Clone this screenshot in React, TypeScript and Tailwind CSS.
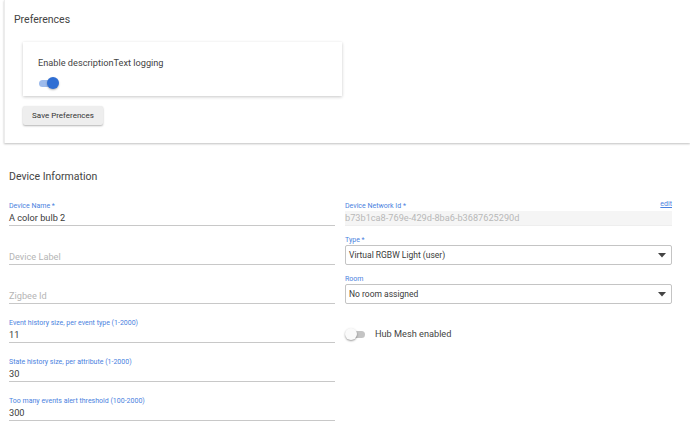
import React from "react";

const font = { fontFamily: "Roboto, 'Noto Sans', Arial, sans-serif" };

function Toggle({ on }: { on: boolean }) {
  return (
    <div className="relative w-[21px] h-[12px] shrink-0">
      <div
        className={
          on
            ? "absolute left-[1px] top-[3px] w-[17px] h-[7px] rounded-full bg-[#9dbbec]"
            : "absolute left-[3px] top-[3px] w-[17px] h-[7px] rounded-full bg-[#c4c4c4]"
        }
      />
      <div
        className={
          on
            ? "absolute left-[9px] top-0 w-[12px] h-[12px] rounded-full bg-[#2f6ed3] shadow-[0_1px_2px_rgba(0,0,0,0.3)]"
            : "absolute left-0 top-0 w-[12px] h-[12px] rounded-full bg-[#fafafa] shadow-[0_1px_2px_rgba(0,0,0,0.4)]"
        }
      />
    </div>
  );
}

function LeftField({ label, value, placeholder }: { label?: string; value?: string; placeholder?: string }) {
  return (
    <div className="h-[39px] flex flex-col justify-end">
      {label && <div className="h-[10px] text-[7px] leading-[10px] text-[#4a82e0]">{label}</div>}
      <div className="h-[15px] border-b border-[#c8c8c8] text-[9.2px] leading-[14px]">
        {value ? <span className="text-[#3a3a3a]">{value}</span> : <span className="text-[#b5b5b5]">{placeholder}</span>}
      </div>
    </div>
  );
}

function Arrow() {
  return (
    <svg width="8" height="5" viewBox="0 0 8 5" className="shrink-0">
      <path d="M0 0 L8 0 L4 4.5 Z" fill="#444" />
    </svg>
  );
}

function SelectField({ label, value }: { label: string; value: string }) {
  return (
    <div className="h-[39px] flex flex-col justify-end">
      <div className="h-[10px] text-[7px] leading-[10px] text-[#4a82e0]">{label}</div>
      <div className="h-[20px] border border-[#c4c4c4] rounded-[2px] flex items-center justify-between pl-[3px] pr-[5px] text-[8.5px] text-[#3a3a3a]">
        <span>{value}</span>
        <Arrow />
      </div>
    </div>
  );
}

export default function App() {
  return (
    <div className="w-[690px] h-[431px] bg-white overflow-hidden" style={font}>
      <div className="ml-[4px] h-[143px] border-l border-[#ececec] shadow-[0_1px_2px_rgba(0,0,0,0.25)] bg-white">
        <div className="pt-[12px] pl-[9px] text-[10.5px] leading-[15px] text-[#444]">Preferences</div>
        <div className="ml-[18px] mt-[15px] w-[319px] h-[54px] bg-white shadow-[0_1px_3px_rgba(0,0,0,0.22)] pl-[15px] pt-[14px]">
          <div className="text-[9.2px] leading-[13px] text-[#444]">Enable descriptionText logging</div>
          <div className="mt-[8px]">
            <Toggle on />
          </div>
        </div>
        <div className="ml-[18px] mt-[10px] w-[80px] h-[19px] bg-[#eeeeee] shadow-[0_1px_2px_rgba(0,0,0,0.3)] rounded-[2px] flex items-center justify-center text-[8px] text-[#333]">
          Save Preferences
        </div>
      </div>

      <div className="mt-[26px] pl-[9px] text-[10.5px] leading-[15px] text-[#444]">Device Information</div>

      <div className="mt-[3px] pl-[9px] flex gap-[10px]">
        <div className="w-[326px] flex flex-col">
          <LeftField label="Device Name *" value="A color bulb 2" />
          <LeftField placeholder="Device Label" />
          <LeftField placeholder="Zigbee Id" />
          <LeftField label="Event history size, per event type (1-2000)" value="11" />
          <LeftField label="State history size, per attribute (1-2000)" value="30" />
          <LeftField label="Too many events alert threshold (100-2000)" value="300" />
        </div>
        <div className="w-[327px] flex flex-col">
          <div className="h-[39px] flex flex-col justify-end">
            <div className="h-[10px] flex justify-between text-[7px] leading-[10px] text-[#4a82e0]">
              <span>Device Network Id *</span>
              <span className="underline -mt-[2px]">edit</span>
            </div>
            <div className="h-[15px] bg-[#f5f5f5] border-b border-[#eeeeee] text-[9.2px] leading-[14px] text-[#b8b8b8]">
              b73b1ca8-769e-429d-8ba6-b3687625290d
            </div>
          </div>
          <SelectField label="Type *" value="Virtual RGBW Light (user)" />
          <SelectField label="Room" value="No room assigned" />
          <div className="h-[39px] pt-[24px] flex items-start gap-[9px]">
            <Toggle on={false} />
            <span className="text-[9.2px] leading-[12px] text-[#444]">Hub Mesh enabled</span>
          </div>
        </div>
      </div>
    </div>
  );
}
